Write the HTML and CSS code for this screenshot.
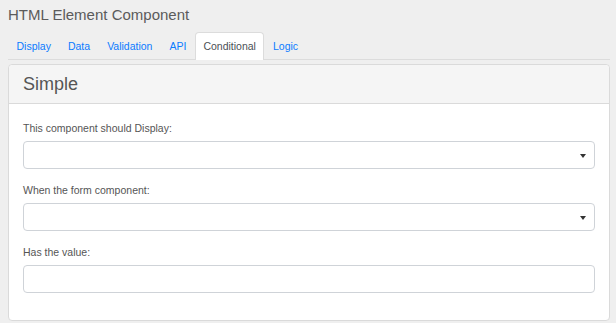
FILE: index.html
```html
<!doctype html>
<html>
<head>
<meta charset="UTF-8" />
<title>HTML Element Component</title>
<link rel="stylesheet" href="styles.css">
</head>
<body>
	<div id="wrapper">
		<h1 class="title">HTML Element Component</h1>
		<ul class="tabs">
			<li><a href="#">Display</a></li>
			<li><a href="#">Data</a></li>
			<li><a href="#">Validation</a></li>
			<li><a href="#">API</a></li>
			<li class="active"><a href="#">Conditional</a></li>
			<li><a href="#">Logic</a></li>
		</ul>
		<div class="panel">
			<div class="panel-heading">Simple</div>
			<div class="panel-body">
				<div class="form-group">
					<label>This component should Display:</label>
					<div class="select"><span class="caret"></span></div>
				</div>
				<div class="form-group">
					<label>When the form component:</label>
					<div class="select"><span class="caret"></span></div>
				</div>
				<div class="form-group">
					<label>Has the value:</label>
					<input type="text" class="input" />
				</div>
			</div>
		</div>
	</div>
</body>
</html>
```

FILE: styles.css
```css
html, body, h1, div, ul, li, a, label, input{
	margin:0;
	padding:0;
	outline:0;
}
body{
	background-color:#efefef;
	font-family:"Liberation Sans", Arial, sans-serif;
}
#wrapper{
	padding:6px 6px 0 8px;
}
.title{
	font-size:15px;
	font-weight:normal;
	line-height:18px;
	color:#5b5b5b;
	margin-bottom:8px;
}
.tabs{
	list-style:none;
	display:flex;
	border-bottom:1px solid #dcdcdc;
}
.tabs li{
	margin-bottom:-1px;
}
.tabs a{
	display:block;
	padding:5px 7.5px;
	line-height:16px;
	font-size:10.5px;
	color:#0b7bff;
	text-decoration:none;
	border:1px solid transparent;
	border-bottom:0;
	border-radius:4px 4px 0 0;
	height:16px;
}
.tabs li.active a{
	color:#4a4f55;
	background-color:#fff;
	border-color:#dcdcdc;
	padding-bottom:6px;
}
.panel{
	margin-top:4px;
	background-color:#fff;
	border:1px solid #dadada;
	border-radius:4px;
}
.panel-heading{
	padding:10px 14px;
	line-height:18px;
	font-size:18px;
	color:#555;
	background-color:#f5f5f5;
	border-bottom:1px solid #dadada;
	border-radius:4px 4px 0 0;
}
.panel-body{
	padding:17px 14px 0;
}
.form-group{
	margin-bottom:14px;
}
.form-group:last-child{
	margin-bottom:0;
	padding-bottom:27px;
}
.form-group label{
	display:block;
	font-size:10.5px;
	line-height:15px;
	color:#555;
	margin-bottom:5px;
}
.select, .input{
	display:block;
	box-sizing:border-box;
	width:100%;
	height:28px;
	border:1px solid #cfd3d8;
	border-radius:4px;
	background-color:#fff;
}
.select{
	display:flex;
	align-items:center;
	justify-content:flex-end;
	padding-right:8px;
}
.caret{
	width:0;
	height:0;
	border-left:3px solid transparent;
	border-right:3px solid transparent;
	border-top:4px solid #333;
	margin-top:1px;
}
```
